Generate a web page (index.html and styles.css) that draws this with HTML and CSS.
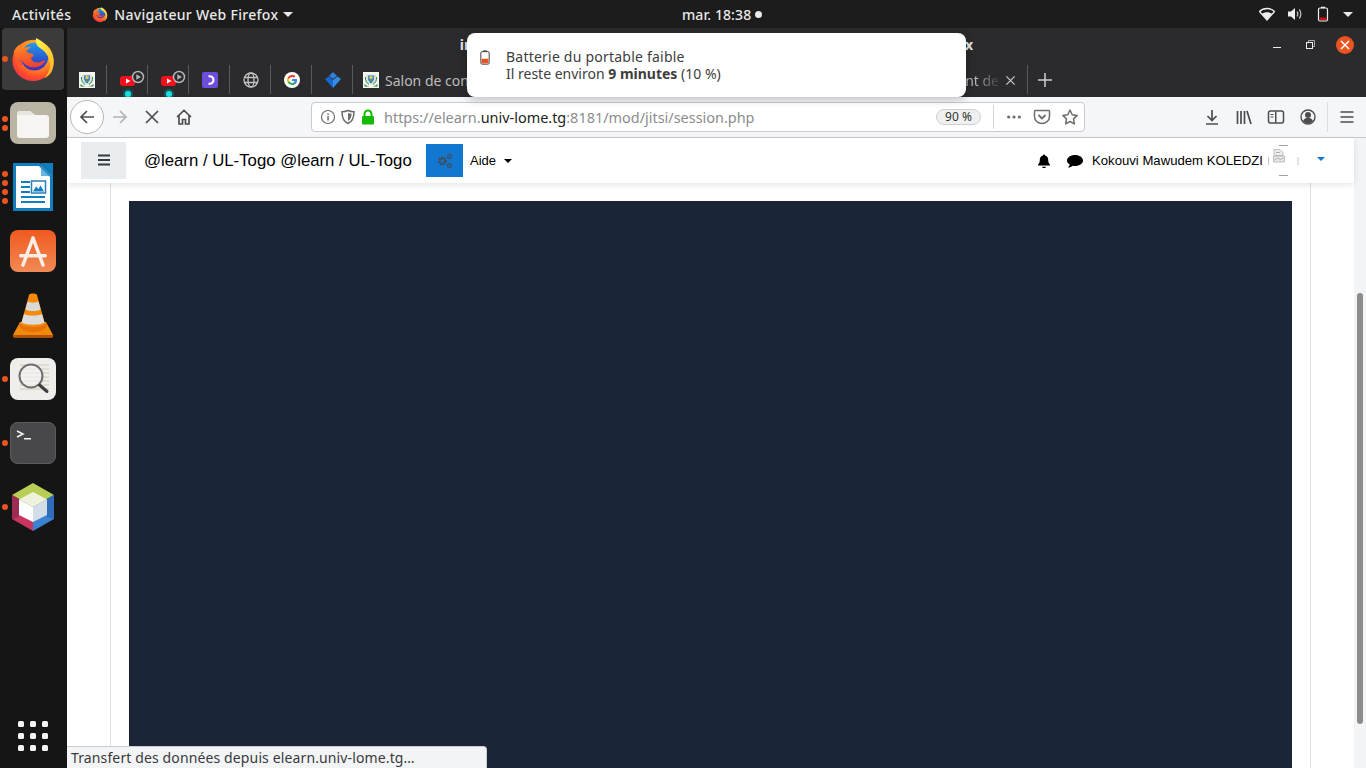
FILE: index.html
```html
<!DOCTYPE html>
<html lang="fr">
<head>
<meta charset="utf-8">
<title>Navigateur Web Firefox</title>
<link rel="stylesheet" href="styles.css">
</head>
<body>
<svg class="defs" width="0" height="0" aria-hidden="true">
  <defs>
    <radialGradient id="ffBase" cx="0.62" cy="0.3" r="0.85">
      <stop offset="0" stop-color="#ffe14a"/>
      <stop offset="0.4" stop-color="#ff9a1f"/>
      <stop offset="0.72" stop-color="#ff4a2b"/>
      <stop offset="1" stop-color="#e0266b"/>
    </radialGradient>
    <linearGradient id="ffBlue" x1="0.5" y1="0" x2="0.5" y2="1">
      <stop offset="0" stop-color="#1f9cf0"/>
      <stop offset="0.6" stop-color="#2c55cf"/>
      <stop offset="1" stop-color="#4a2cb0"/>
    </linearGradient>
    <linearGradient id="ffTail" x1="0.3" y1="0" x2="0.6" y2="1">
      <stop offset="0" stop-color="#fff04d"/>
      <stop offset="1" stop-color="#ffb01e"/>
    </linearGradient>
    <linearGradient id="ffHead" x1="0.3" y1="0" x2="0.5" y2="1">
      <stop offset="0" stop-color="#ff8a24"/>
      <stop offset="1" stop-color="#f5402c"/>
    </linearGradient>
    <linearGradient id="swGrad" x1="0" y1="0" x2="0" y2="1">
      <stop offset="0" stop-color="#f0591f"/>
      <stop offset="1" stop-color="#f08a55"/>
    </linearGradient>
    <symbol id="firefox" viewBox="0 0 48 48">
      <circle cx="24" cy="25.5" r="21.5" fill="url(#ffBase)"/>
      <circle cx="25.500" cy="21.500" r="14.500" fill="url(#ffBlue)"/>
      <path d="M27 2c7 3 17 11 18.500 22 .6 5-.2 9-2 13-1.500 3-5 6-8 7 5-5 7-11 6-17-1-7-6-12-11-15-3-2-4-6-3.500-10z" fill="url(#ffTail)"/>
      <path d="M4 16c1.500-3.500 4-6 6-7 0 2 .5 3.500 2 4.500 2-1.500 6-2.500 10-1.500-3 1.500-5 3-5 4.500 1 1.500 5 1.200 7 2.500 1.500 1 0 3-2 3.500 0 2 1 4 4 5 3 .8 7-.2 9-2 1-.5 2 .3 1 1.500-2 3-6 5.500-11 5.500-6 0-11-3-13-8-.5 2 0 5 1 7-5-3-9-9-9-15z" fill="url(#ffHead)"/>
    </symbol>
    <symbol id="ulogo" viewBox="0 0 16 16">
      <rect width="16" height="16" fill="#f4f6f0"/>
      <path d="M3 2.500h10v5.500c0 2.500-2.500 4-5 4.500-2.500-.5-5-2-5-4.500z" fill="#d8dfe0"/>
      <path d="M5 3.500h6v3.500c0 1.500-1.500 2.500-3 3-1.500-.5-3-1.500-3-3z" fill="#3f82c7"/>
      <circle cx="8" cy="5.500" r="1.800" fill="#e9c93d"/>
      <path d="M6 8.500c1 1.500 3 1.500 4-.5l-1 3-2 0z" fill="#2f9a4a"/>
      <path d="M1.500 12c2 2 4.500 2.500 6.500 2.500s4.500-.5 6.500-2.500v2.500h-13z" fill="#2d8a46"/>
      <path d="M2.500 5c-.5 3 1 6 3.500 7.500M13.500 5c.5 3-1 6-3.500 7.500" fill="none" stroke="#2d8a46"/>
    </symbol>
    <symbol id="youtube" viewBox="0 0 41 35">
      <rect x="13" y="14" width="15" height="10" rx="3" fill="#f2101c"/>
      <path d="M19 16.500v5l4.500-2.500z" fill="#fff"/>
      <circle cx="31" cy="15" r="5.500" fill="#2b2a2c" stroke="#b4b4b4" stroke-width="1.500"/>
      <path d="M29.300 12.200v5.600l4.700-2.800z" fill="#b4b4b4"/>
      <circle cx="21" cy="32" r="5" fill="#0f5f62"/>
      <circle cx="21" cy="32" r="3" fill="#19dde0"/>
    </symbol>
  </defs>
</svg>

<div class="screen">
  <header class="topbar">
    <div class="topbar-left">
      <span class="top-label top-label-wide">Activités</span>
      <span class="app-menu">
        <svg class="app-menu-icon"><use href="#firefox"/></svg>
        <span class="top-label top-label-wide">Navigateur Web Firefox</span>
        <span class="caret-down"></span>
      </span>
    </div>
    <div class="clock">
      <span class="top-label">mar. 18:38</span>
      <span class="clock-dot"></span>
    </div>
    <div class="tray">
      <svg class="tray-icon" viewBox="0 0 16 16"><path d="M.5 5.500C2.500 3.500 5 2.500 8 2.500s5.500 1 7.500 3L8 14z" fill="none" stroke="#eee" stroke-width="1.300"/><path d="M3.200 7.800C4.500 6.800 6 6.300 8 6.300s3.500.5 4.800 1.500L8 14z" fill="#eee"/></svg>
      <svg class="tray-icon" viewBox="0 0 16 16"><path d="M1 5.500h3L8 2v12l-4-3.500H1z" fill="#eee"/><path d="M10 5.500c1 1.500 1 3.500 0 5M12.300 3.500c2 2.500 2 6.500 0 9" fill="none" stroke="#bbb" stroke-width="1.300"/></svg>
      <svg class="tray-icon" viewBox="0 0 16 16"><rect x="3.500" y="2" width="9" height="13" rx="1.500" fill="none" stroke="#eee" stroke-width="1.200"/><rect x="6" y=".7" width="4" height="1.500" fill="#eee"/><rect x="4.500" y="11.500" width="7" height="2.500" fill="#d50d0d"/></svg>
      <span class="caret-down caret-tray"></span>
    </div>
  </header>

  <div class="desk">
    <nav class="dock">
      <div class="dock-item dock-item-active">
        <span class="pips"><i></i></span>
        <svg class="ic-firefox"><use href="#firefox"/></svg>
      </div>
      <div class="dock-item">
        <span class="pips"><i></i><i></i></span>
        <svg class="ic-46" viewBox="0 0 46 42"><rect width="46" height="42" rx="8" fill="#b9b4a3"/><path d="M7 12a3 3 0 0 1 3-3h10l5 4h11a3 3 0 0 1 3 3v17a3 3 0 0 1-3 3H10a3 3 0 0 1-3-3z" fill="#f7f5f1"/><path d="M7 12a3 3 0 0 1 3-3h10l5 4H7z" fill="#e8e5df"/></svg>
      </div>
      <div class="dock-item">
        <span class="pips"><i></i><i></i><i></i><i></i></span>
        <svg class="ic-writer" viewBox="0 0 40 48"><path d="M0 0h27l13 13v35H0z" fill="#0f7fc0"/><path d="M3 3h23l11 11v31H3z" fill="#fff"/><path d="M28 0h12v13z" fill="#0f7fc0"/><path d="M28 0l12 13h-12z" fill="#2d94d0" opacity=".7"/><g fill="#0f7fc0"><rect x="8" y="18" width="9" height="2"/><rect x="8" y="23" width="9" height="2"/><rect x="8" y="28" width="9" height="2"/><rect x="8" y="33" width="24" height="2"/><rect x="8" y="38" width="24" height="2"/></g><rect x="18.500" y="18" width="14" height="12" fill="#fff" stroke="#2b7fb8" stroke-width="1.500"/><path d="M20 28.500l3-5 2.500 2.500 2-3.500 3.500 6z" fill="#0f7fc0"/></svg>
      </div>
      <div class="dock-item">
        <svg class="ic-46" viewBox="0 0 46 42"><rect width="46" height="42" rx="8" fill="url(#swGrad)"/><path d="M23 8L13 35M23 8l10 27" stroke="#fbeee6" stroke-width="3.500" fill="none" stroke-linecap="round"/><rect x="9" y="24" width="28" height="3.500" rx="1.700" fill="#fbeee6"/></svg>
      </div>
      <div class="dock-item">
        <svg class="ic-vlc" viewBox="0 0 42 46"><path d="M8 30h26l7 13c.5 1.500-.5 2.500-2 2.500H3c-1.500 0-2.500-1-2-2.500z" fill="#f08a0c"/><path d="M1 43h40l-.5 2.500h-39z" fill="#b84f05"/><path d="M7 32h28c0 5-6 8-14 8s-14-3-14-8z" fill="#e8710a"/><path d="M17 3c0-2 8-2 8 0l8 29c-3 4-21 4-24 0z" fill="#f58a0b"/><path d="M15.500 9.500c3 1.500 8 1.500 11 0l2 8c-4 2-11 2-15 0z" fill="#d9d9d9"/><path d="M12 22c4 2 14 2 18 0l2.500 8.500c-5 3-18 3-23 0z" fill="#dcdcdc"/></svg>
      </div>
      <div class="dock-item">
        <span class="pips"><i></i></span>
        <svg class="ic-46" viewBox="0 0 46 42"><rect width="46" height="42" rx="8" fill="#efeeeb"/><g stroke="#cfcabb" stroke-width="1"><path d="M10 7h29M10 11h29M10 15h29M10 19h29M10 23h29M10 27h29M10 31h29"/></g><circle cx="21" cy="18" r="11.500" fill="#f5f5f3" fill-opacity=".6" stroke="#6e6e6e" stroke-width="2"/><path d="M29.500 27l7.500 6.500" stroke="#3f3f3f" stroke-width="3" stroke-linecap="round"/></svg>
      </div>
      <div class="dock-item">
        <span class="pips"><i></i></span>
        <svg class="ic-46" viewBox="0 0 46 42"><rect width="46" height="42" rx="8" fill="#48484a"/><rect x=".5" y=".5" width="45" height="41" rx="7.500" fill="none" stroke="#5c5c5e"/><path d="M7 9l6 3-6 3" fill="none" stroke="#f4f4f4" stroke-width="1.500"/><rect x="14" y="16" width="7" height="1.500" fill="#f4f4f4"/></svg>
      </div>
      <div class="dock-item">
        <span class="pips"><i></i></span>
        <svg class="ic-nb" viewBox="0 0 42 48"><path d="M21 0l21 12-21 12L0 12z" fill="#b7cf57"/><path d="M0 12l21 12v24L0 36z" fill="#c8355f"/><path d="M42 12L21 24v24l21-12z" fill="#3b82d2"/><path d="M0 12l7 4v18l-7 2z" fill="#9b2c52"/><path d="M42 12l-7 4v18l7 2z" fill="#2f6dbb"/><path d="M21 9l14 7.500L21 24 7 16.500z" fill="#eef2dd"/><path d="M7 16.500L21 24v15L7 32z" fill="#fff"/><path d="M35 16.500L21 24v15l14-7z" fill="#d3dde8"/></svg>
      </div>
      <div class="dock-apps">
        <i></i><i></i><i></i><i></i><i></i><i></i><i></i><i></i><i></i>
      </div>
    </nav>

    <main class="window">
      <div class="titlebar">
        <div class="title-text"><span>in</span><span class="title-gap"></span><span>x</span></div>
        <div class="window-buttons">
          <svg class="win-ctl" viewBox="0 0 12 12"><rect x="2" y="8" width="8" height="1" fill="#eee"/></svg>
          <svg class="win-ctl" viewBox="0 0 12 12"><rect x="2.500" y="3.500" width="6" height="6" fill="none" stroke="#eee"/><path d="M4.500 3V1.500h6v6H9" fill="none" stroke="#aaa"/></svg>
          <span class="win-close"><svg viewBox="0 0 18 18"><path d="M5 5l8 8M13 5l-8 8" stroke="#fff" stroke-width="1.500"/></svg></span>
        </div>
      </div>

      <div class="tabstrip">
        <div class="tab tab-first"><svg class="fav"><use href="#ulogo"/></svg></div>
        <div class="tab"><svg class="tab-media"><use href="#youtube"/></svg></div>
        <div class="tab"><svg class="tab-media"><use href="#youtube"/></svg></div>
        <div class="tab"><svg class="fav" viewBox="0 0 16 16"><rect width="16" height="16" rx="2" fill="#6b4fdc"/><path d="M6.500 4.500c2.500-.8 5 .5 5 3.500s-2.500 4.300-5 3.500" fill="none" stroke="#fff" stroke-width="2.200"/><circle cx="5.500" cy="8" r="1.100" fill="#6b4fdc"/></svg></div>
        <div class="tab"><svg class="fav" viewBox="0 0 16 16"><g fill="none" stroke="#c2c2c2" stroke-width="1.300"><circle cx="8" cy="8" r="7"/><ellipse cx="8" cy="8" rx="3" ry="7"/><path d="M1.500 5.500h13M1.500 10.500h13"/></g></svg></div>
        <div class="tab"><svg class="fav" viewBox="0 0 16 16"><circle cx="8" cy="8" r="8" fill="#fff"/><path d="M12.800 7H8v2h2.800c-.3 1.300-1.400 2-2.800 2a3 3 0 0 1-2.800-2L3.500 10.300A5 5 0 0 0 8 13c2.800 0 5-2 5-4.800 0-.4 0-.8-.2-1.200z" fill="#34a853"/><path d="M5.200 9a3 3 0 0 1 0-2L3.500 5.700a5 5 0 0 0 0 4.600z" fill="#fbbc05"/><path d="M8 5c.8 0 1.500.3 2 .8l1.500-1.500A5 5 0 0 0 3.500 5.700L5.200 7A3 3 0 0 1 8 5z" fill="#ea4335"/><path d="M12.800 7H8v2h2.800c-.2.700-.6 1.200-1.100 1.500l1.600 1.300c1-.9 1.700-2.200 1.700-3.600 0-.4 0-.8-.2-1.200z" fill="#4285f4"/></svg></div>
        <div class="tab"><svg class="fav" viewBox="0 0 16 16"><path d="M8 0l4 4-4 3-4-3z" fill="#2f7fe0"/><path d="M0 7l3.500-2.500L8 8v8z" fill="#1769d2"/><path d="M16 7l-3.500-2.500L8 8v8z" fill="#2f8fe8"/></svg></div>
        <div class="tab tab-wide">
          <svg class="fav"><use href="#ulogo"/></svg>
          <span class="tab-title">Salon de conférence</span>
          <span class="tab-title tab-title-fade">nt de</span>
          <svg class="tab-close" viewBox="0 0 12 12"><path d="M1.500 1.500l9 9M10.500 1.500l-9 9" stroke="#c8c8c8" stroke-width="1.400"/></svg>
        </div>
        <svg class="tab-new" viewBox="0 0 14 14"><path d="M7 0v14M0 7h14" stroke="#d0d0d0" stroke-width="1.500"/></svg>
      </div>

      <div class="toolbar">
        <span class="back-btn"><svg viewBox="0 0 18 18" class="tb-ic"><path d="M16 9H3M9 3L3 9l6 6" fill="none" stroke="#4d4d4f" stroke-width="1.700"/></svg></span>
        <svg viewBox="0 0 18 18" class="tb-ic tb-forward"><path d="M2 9h13M9 3l6 6-6 6" fill="none" stroke="#b3b3b5" stroke-width="1.700"/></svg>
        <svg viewBox="0 0 18 18" class="tb-ic tb-stop"><path d="M3 3l12 12M15 3L3 15" fill="none" stroke="#4d4d4f" stroke-width="1.700"/></svg>
        <svg viewBox="0 0 18 18" class="tb-ic tb-home"><path d="M2 9l7-6.500L16 9M4 7.500V16h3.500v-4.500h3V16H14V7.500" fill="none" stroke="#4d4d4f" stroke-width="1.700"/></svg>
        <div class="urlbar">
          <svg viewBox="0 0 16 16" class="url-ic url-info"><circle cx="8" cy="8" r="6.500" fill="none" stroke="#6d6d6f" stroke-width="1.200"/><rect x="7.300" y="7" width="1.500" height="4.500" fill="#6d6d6f"/><rect x="7.300" y="4.500" width="1.500" height="1.500" fill="#6d6d6f"/></svg>
          <svg viewBox="0 0 16 16" class="url-ic url-shield"><path d="M8 1.500c2 1 4 1.200 6 1.200 0 5.500-1.500 9.800-6 11.800C3.500 12.500 2 8.200 2 2.700c2 0 4-.2 6-1.200z" fill="none" stroke="#6d6d6f" stroke-width="1.500"/><path d="M8 4v8c2.500-1.500 3.500-4 3.700-7.300C10.500 4.700 9 4.500 8 4z" fill="#6d6d6f"/></svg>
          <svg viewBox="0 0 14 16" class="url-ic url-lock"><rect x="1" y="7" width="12" height="8.500" rx="1" fill="#12bc00"/><path d="M3.500 7V5a3.500 3.500 0 0 1 7 0v2" fill="none" stroke="#12bc00" stroke-width="2"/></svg>
          <span class="url-text">https://elearn.<b>univ-lome.tg</b>:8181/mod/jitsi/session.php</span>
          <span class="zoom-pill">90 %</span>
          <span class="url-sep"></span>
          <svg viewBox="0 0 18 18" class="tb-ic url-more"><circle cx="3" cy="9" r="1.800" fill="#6d6d6f"/><circle cx="9" cy="9" r="1.800" fill="#6d6d6f"/><circle cx="15" cy="9" r="1.800" fill="#6d6d6f"/></svg>
          <svg viewBox="0 0 18 18" class="tb-ic url-pocket"><path d="M2.500 2.500h13c.6 0 1 .4 1 1v5c0 4-3.500 7-7.500 7s-7.500-3-7.500-7v-5c0-.6.400-1 1-1z" fill="none" stroke="#6d6d6f" stroke-width="1.500"/><path d="M5.500 7L9 10.500 12.500 7" fill="none" stroke="#6d6d6f" stroke-width="1.800"/></svg>
          <svg viewBox="0 0 18 18" class="tb-ic url-star"><path d="M9 2l2.200 4.700 5 .7-3.700 3.500.9 5L9 13.500 4.600 15.900l.9-5L1.800 7.400l5-.7z" fill="none" stroke="#6d6d6f" stroke-width="1.500" stroke-linejoin="round"/></svg>
        </div>
        <div class="tb-right">
          <svg viewBox="0 0 18 18" class="tb-ic"><path d="M9 2v10M4.500 8L9 12.500 13.500 8M3 16h12" fill="none" stroke="#4d4d4f" stroke-width="1.700"/></svg>
          <svg viewBox="0 0 18 18" class="tb-ic"><path d="M2.500 3v13M6 3v13M9.500 3v13M12 3l4 13" fill="none" stroke="#4d4d4f" stroke-width="1.700"/></svg>
          <svg viewBox="0 0 18 18" class="tb-ic"><rect x="1.500" y="3" width="15" height="12" rx="2" fill="none" stroke="#4d4d4f" stroke-width="1.500"/><rect x="8" y="3.500" width="1.500" height="11" fill="#4d4d4f"/><path d="M3.500 6.500h3M3.500 9h3" stroke="#4d4d4f" stroke-width="1.200"/></svg>
          <svg viewBox="0 0 18 18" class="tb-ic"><circle cx="9" cy="9" r="7" fill="none" stroke="#4d4d4f" stroke-width="1.400"/><circle cx="9" cy="7" r="3" fill="#4d4d4f"/><path d="M4 13c1-2.500 3-3 5-3s4 .5 5 3c-1.500 1.800-3 2.400-5 2.400S5.500 14.800 4 13z" fill="#4d4d4f"/></svg>
          <span class="tb-sep"></span>
          <svg viewBox="0 0 18 18" class="tb-ic"><path d="M2.500 4h13M2.500 9h13M2.500 14h13" stroke="#4d4d4f" stroke-width="1.700"/></svg>
        </div>
      </div>

      <div class="viewport">
        <div class="page">
          <div class="navbar">
            <span class="burger"><svg viewBox="0 0 14 12" class="burger-ic"><path d="M1 1.500h12M1 6h12M1 10.500h12" stroke="#343a40" stroke-width="1.800"/></svg></span>
            <span class="brand">@learn / UL-Togo @learn / UL-Togo</span>
            <span class="admin-btn">
              <svg viewBox="0 0 16 16" class="admin-ic"><g fill="none" stroke="#454a50"><circle cx="5.500" cy="8" r="3" stroke-width="2.800" stroke-dasharray="1.800 .7"/><circle cx="12.500" cy="3.500" r="1.800" stroke-width="1.800" stroke-dasharray="1.200 .5"/><circle cx="12.500" cy="12.500" r="1.800" stroke-width="1.800" stroke-dasharray="1.200 .5"/></g></svg>
            </span>
            <span class="help">Aide</span>
            <span class="caret-help"></span>
            <span class="nav-spacer"></span>
            <svg viewBox="0 0 14 16" class="nav-ic nav-bell"><path d="M7 0.500c.7 0 1.100.5 1.100 1.100 2.400.5 3.700 2.400 3.700 4.900 0 3 .8 4.300 2 5.500v1H.2v-1c1.200-1.200 2-2.500 2-5.500 0-2.500 1.300-4.400 3.700-4.900C5.900 1 6.300.5 7 .5zM5 14.500h4a2 2 0 0 1-4 0z" fill="#000"/></svg>
            <svg viewBox="0 0 16 14" class="nav-ic nav-comment"><path d="M8 1c4.400 0 8 2.400 8 5.500S12.400 12 8 12c-.9 0-1.700-.1-2.500-.3C4.500 12.600 3 13.500 1 13.500c1-1 1.600-2 1.800-3C1 9.500 0 8.100 0 6.500 0 3.400 3.600 1 8 1z" fill="#000"/></svg>
            <span class="user">Kokouvi Mawudem KOLEDZI</span>
            <svg class="avatar" viewBox="0 0 32 32">
              <path d="M12 .5h9M12 30.500h9" stroke="#8c8c8c" stroke-width=".8"/>
              <path d="M1.500 12v8M31 12v8" stroke="#c4c4c4" stroke-width="1"/>
              <path d="M7 4.500h6l3 3v3H7z" fill="#ececec" stroke="#b0b0b0" stroke-width=".8"/>
              <path d="M6.500 11h11v6h-11z" fill="#e6e6e6" stroke="#b0b0b0" stroke-width=".8"/>
              <path d="M9 7.500h4M7.500 15l3-2 3 1.500 3-1.500" stroke="#a0a0a0" stroke-width=".8" fill="none"/>
            </svg>
            <span class="caret-user"></span>
          </div>
          <div class="course">
            <div class="course-column">
              <div class="video-stage"></div>
            </div>
          </div>
        </div>
        <div class="scrolltrack"><div class="scrollthumb"></div></div>
      </div>

      <div class="notification">
        <svg viewBox="0 0 12 18" class="notif-battery"><rect x="1" y="2" width="10" height="15" rx="1.500" fill="none" stroke="#444" stroke-width="1.200"/><rect x="3.500" y=".5" width="5" height="1.500" fill="#444"/><rect x="2" y="10.500" width="8" height="5.500" fill="#e95420"/></svg>
        <div class="notif-body">
          <div class="notif-title">Batterie du portable faible</div>
          <div>Il reste environ <b>9 minutes</b> (10 %)</div>
        </div>
      </div>

      <div class="statusbar">Transfert des données depuis elearn.univ-lome.tg…</div>
    </main>
  </div>
</div>
</body>
</html>
```

FILE: styles.css
```css
* { box-sizing: border-box; }
html, body { margin: 0; padding: 0; }
body { width: 1366px; height: 768px; overflow: hidden; font-family: "Noto Sans", "Open Sans", sans-serif; background: #000; }
.defs { position: absolute; }
svg { display: block; flex: none; }
.screen { width: 1366px; height: 768px; display: flex; flex-direction: column; overflow: hidden; }

/* top bar */
.topbar { height: 28px; flex: none; background: #1c1c1c; display: flex; align-items: center; position: relative; color: #e9e9e9; }
.top-label { font-size: 14px; font-weight: 500; letter-spacing: 0.1px; white-space: nowrap; }
.top-label-wide { letter-spacing: 0.3px; }
.topbar-left { display: flex; align-items: center; padding-left: 12px; flex: none; gap: 21px; }
.app-menu { display: flex; align-items: center; }
.app-menu-icon { width: 16px; height: 17px; margin-right: 6px; }
.caret-down { width: 0; height: 0; border-left: 5px solid transparent; border-right: 5px solid transparent; border-top: 5px solid #e9e9e9; margin-left: 5px; }
.clock { position: absolute; left: 682px; top: 0; height: 28px; display: flex; align-items: center; gap: 4px; }
.clock-dot { width: 7px; height: 7px; border-radius: 50%; background: #e9e9e9; }
.tray { margin-left: auto; display: flex; align-items: center; gap: 12px; padding-right: 13px; }
.tray-icon { width: 16px; height: 16px; }
.caret-tray { margin-left: 0; }

/* dock */
.desk { flex: 1; display: flex; min-height: 0; position: relative; }
.dock { width: 67px; flex: none; background: #151515; display: flex; flex-direction: column; padding: 0 3px 0 2px; position: relative; }
.dock-item { width: 62px; height: 62px; margin-bottom: 2px; display: flex; align-items: center; justify-content: center; flex: none; border-radius: 4px; position: relative; }
.dock-item-active { background: #3b3b3b; }
.pips { position: absolute; left: 0; top: 0; bottom: 0; display: flex; flex-direction: column; justify-content: center; gap: 3px; }
.pips i { display: block; width: 6px; height: 6px; border-radius: 50%; background: #e95420; }
.ic-firefox { width: 46px; height: 48px; }
.ic-46 { width: 46px; height: 42px; }
.ic-writer { width: 40px; height: 48px; }
.ic-vlc { width: 42px; height: 46px; }
.ic-nb { width: 42px; height: 48px; }
.dock-apps { margin: auto 0 17px 16px; width: 30px; display: grid; grid-template-columns: repeat(3, 6px); grid-auto-rows: 6px; gap: 6px; }
.dock-apps i { display: block; background: #f4f4f4; border-radius: 1.500px; }

/* window */
.window { flex: 1; min-width: 0; display: flex; flex-direction: column; position: relative; }
.titlebar { height: 34px; flex: none; background: #2b2a2c; display: flex; align-items: center; justify-content: center; position: relative; }
.title-text { display: flex; color: #e8e8e8; font-size: 14px; font-weight: 700; line-height: 34px; }
.title-gap { width: 492px; }
.window-buttons { position: absolute; right: 12px; top: 0; height: 34px; display: flex; align-items: center; gap: 21px; }
.win-ctl { width: 12px; height: 12px; }
.win-close { width: 18px; height: 18px; border-radius: 50%; background: #e95420; display: block; margin-left: -1px; }
.win-close svg { width: 18px; height: 18px; }

/* tabs */
.tabstrip { height: 35px; flex: none; background: #2b2a2c; display: flex; align-items: center; }
.tab { width: 41px; height: 35px; flex: none; display: flex; align-items: center; justify-content: center; position: relative; }
.tab::after { content: ""; position: absolute; right: 0; top: 3px; bottom: 3px; width: 1px; background: #5a595b; }
.tab-first { width: 40px; }
.fav { width: 16px; height: 16px; }
.tab-media { width: 41px; height: 35px; overflow: hidden; }
.tab-wide { width: 675px; justify-content: flex-start; padding: 0 0 0 10px; color: #bdbdbd; }
.tab-title { font-size: 14px; white-space: nowrap; margin-left: 6px; padding-top: 1px; }
.tab-title-fade { margin-left: auto; background: linear-gradient(90deg, #bdbdbd 30%, #3a393b); -webkit-background-clip: text; background-clip: text; color: transparent; }
.tab-close { width: 11px; height: 11px; margin: 1px 12px 0 6px; }
.tab-new { width: 14px; height: 14px; margin-left: 10px; }

/* toolbar */
.toolbar { height: 41px; flex: none; background: #f5f6f7; border-bottom: 1px solid #c6c9cf; display: flex; align-items: center; padding-left: 3px; }
.tb-ic { width: 18px; height: 18px; }
.back-btn { width: 34px; height: 34px; border-radius: 50%; border: 1px solid #b8b8ba; background: #fff; display: flex; align-items: center; justify-content: center; }
.tb-forward { margin-left: 7px; }
.tb-stop { margin-left: 14px; }
.tb-home { margin-left: 14px; }
.urlbar { width: 774px; height: 30px; margin-left: 118px; background: #fff; border: 1px solid #c9cbd0; border-radius: 4px; display: flex; align-items: center; padding-left: 8px; }
.url-ic { width: 16px; height: 16px; }
.url-shield { margin-left: 4px; }
.url-lock { width: 14px; margin-left: 5px; }
.url-text { margin-left: 9px; font-size: 14.450px; color: #8c8c8e; white-space: nowrap; flex: none; width: 552px; }
.url-text b { font-weight: 400; color: #1d1d22; }
.zoom-pill { width: 45px; height: 16px; border-radius: 8px; border: 1px solid #cfcfd2; background: #eff0f1; font-size: 12px; line-height: 14px; text-align: center; color: #333; flex: none; }
.url-sep { width: 1px; height: 24px; background: #d3d4d7; margin-left: 12px; flex: none; }
.url-more { width: 16px; height: 16px; margin-left: 12px; }
.url-pocket { margin-left: 11px; }
.url-star { margin-left: 10px; }
.tb-right { display: flex; align-items: center; margin-left: 118px; gap: 14px; }
.tb-sep { width: 1px; height: 30px; background: #dcdde0; margin-left: -4px; }
.tb-right .tb-ic:last-child { margin-left: -4px; }

/* page */
.viewport { flex: 1; min-height: 0; display: flex; }
.page { flex: 1; min-width: 0; background: #fff; display: flex; flex-direction: column; }
.navbar { height: 45px; flex: none; display: flex; align-items: center; background: #fff; box-shadow: 0 2px 6px rgba(0, 0, 0, 0.1); position: relative; padding-left: 14px; color: #000; font-family: "Liberation Sans", Arial, sans-serif; }
.burger { width: 45px; height: 37px; background: #e9ecef; display: flex; align-items: center; justify-content: center; flex: none; margin-top: -1px; }
.burger-ic { width: 14px; height: 12px; }
.brand { font-size: 16.750px; margin-left: 18px; white-space: nowrap; width: 282px; }
.admin-btn { width: 37px; height: 33px; background: #1177d1; display: flex; align-items: center; justify-content: center; flex: none; }
.admin-ic { width: 16px; height: 16px; }
.help { font-size: 13px; margin-left: 7px; }
.caret-help { width: 0; height: 0; border-left: 4.500px solid transparent; border-right: 4.500px solid transparent; border-top: 4.500px solid #000; margin-left: 8px; }
.nav-spacer { flex: 1; }
.nav-ic { width: 14px; height: 14px; }
.nav-comment { width: 16px; margin-left: 16px; }
.user { font-size: 13.150px; margin-left: 9px; white-space: nowrap; width: 171px; }
.avatar { width: 32px; height: 32px; margin-left: 4px; }
.caret-user { width: 0; height: 0; border-left: 4.500px solid transparent; border-right: 4.500px solid transparent; border-top: 4.500px solid #1177d1; margin: -3px 29.500px 0 17.500px; }
.course { flex: 1; min-height: 0; padding-left: 43px; overflow: hidden; }
.course-column { width: 1201px; height: 100%; border-left: 1px solid #dee2e6; border-right: 1px solid #dee2e6; padding: 18px 18px 0 18px; }
.video-stage { width: 1163px; height: 100%; background: #1b2538; }
.scrolltrack { width: 12px; flex: none; background: #f3f4f6; padding: 155px 3px 0; }
.scrollthumb { width: 6px; height: 431px; background: #8c8c8c; border-radius: 3px; }

/* overlays */
.notification { position: absolute; left: 400px; top: 5px; width: 499px; height: 64px; background: #fff; border-radius: 8px; box-shadow: 0 2px 10px rgba(0, 0, 0, 0.25); display: flex; align-items: center; padding-left: 13px; color: #3d3d3d; font-size: 14px; line-height: 17px; }
.notif-battery { width: 10px; height: 15px; margin-top: -15px; }
.notif-body { margin-left: 16px; }
.notif-title { letter-spacing: 0.22px; }
.notif-body b { font-weight: 700; }
.statusbar { position: absolute; left: 0; bottom: 0; width: 420px; height: 22px; background: #f3f4f6; border: 1px solid #c9cbd0; border-left: 0; border-bottom: 0; border-top-right-radius: 4px; font-size: 14px; line-height: 22px; padding-left: 4px; color: #3a3a3c; white-space: nowrap; letter-spacing: 0.125px; }
```
